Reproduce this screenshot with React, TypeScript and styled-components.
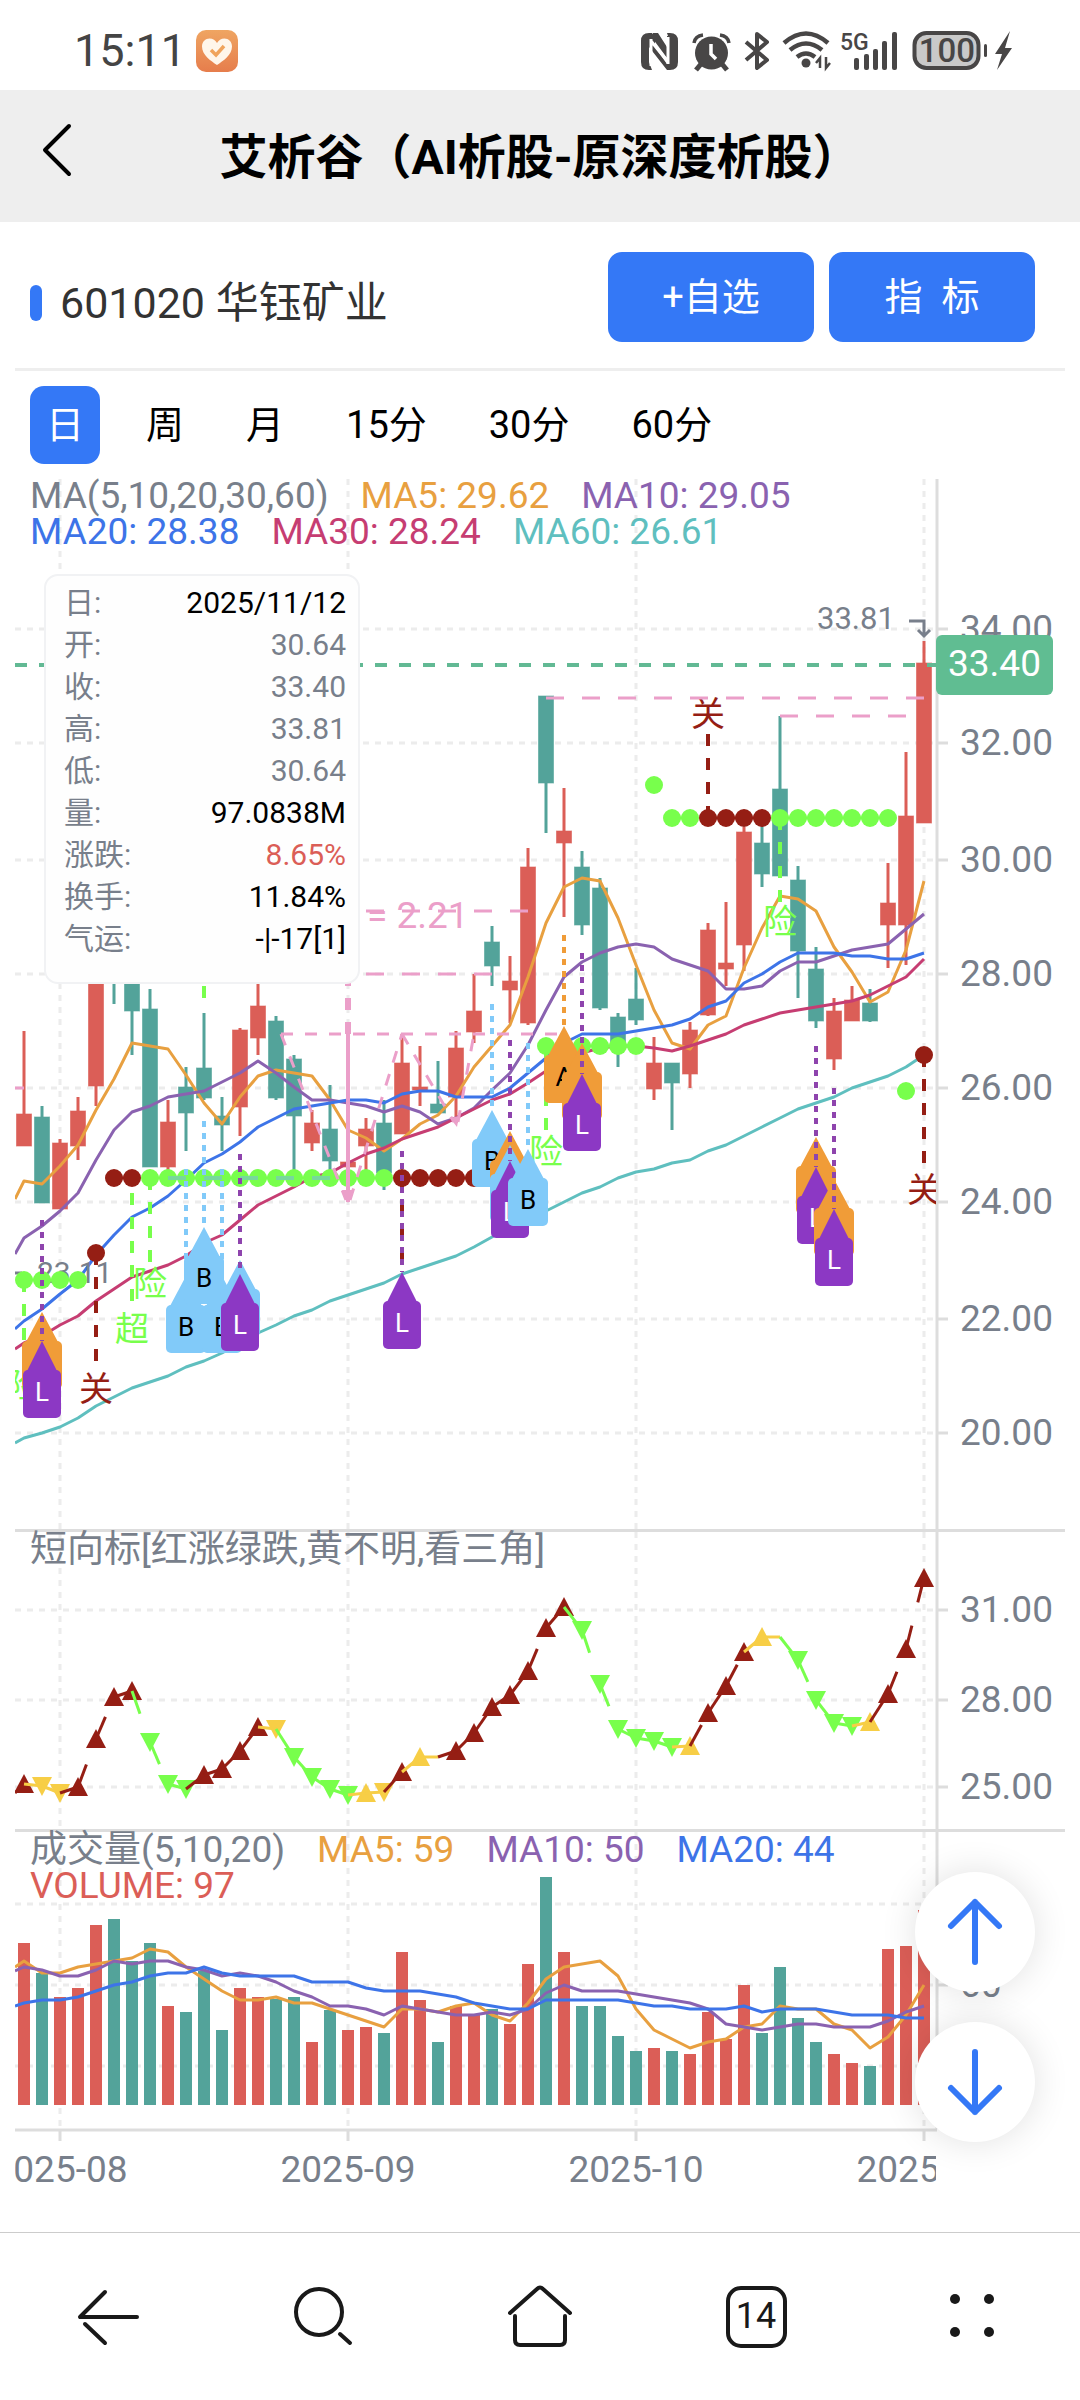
import React from 'react';
import styled, { createGlobalStyle } from 'styled-components';

const FONT = 'Roboto, "Noto Sans CJK SC", sans-serif';
const C = {
  brand: '#3478f6',
  up: '#db5e57',
  down: '#53a39a',
  ma5: '#e8a040',
  ma10: '#8a62b0',
  ma20: '#3d74e8',
  ma30: '#c63d72',
  ma60: '#5fbfbf',
  grey: '#787f8b',
  line: '#dddddd',
  grid: '#ececec',
  lime: '#78ff4c',
  dark: '#951e14',
  pink: '#eb9fc9',
  yellow: '#f7ce46',
  tag: '#60bd92',
  sky: '#81caf9',
  amber: '#f09c38',
  violet: '#8c38c4',
  plum: '#8e44ad',
};

const GlobalStyle = createGlobalStyle`
  * { box-sizing: border-box; }
  body { margin: 0; background: #fff; font-family: ${FONT}; }
  button { font-family: inherit; border: 0; padding: 0; background: none; cursor: pointer; }
`;

const Page = styled.div`
  display: flex;
  flex-direction: column;
  background: #fff;
`;

const StatusBar = styled.div`
  display: flex;
  align-items: center;
  height: 90px;
  padding: 12px 68px 0 74px;
  color: #444;
`;
const Clock = styled.span`
  font-size: 45px;
  line-height: 48px;
  margin-right: 10px;
`;
const StatusIcons = styled.svg`
  margin-left: auto;
`;

const TitleBar = styled.header`
  display: grid;
  grid-template-columns: 120px 1fr 120px;
  align-items: center;
  height: 132px;
  background: #eee;
`;
const BackButton = styled.button`
  display: flex;
  padding: 0 0 12px 40px;
`;
const Title = styled.h1`
  margin: 0;
  padding-top: 4px;
  font-size: 48px;
  line-height: 64px;
  font-weight: 700;
  text-align: center;
  white-space: nowrap;
`;

const StockRow = styled.section`
  display: flex;
  align-items: center;
  gap: 15px;
  margin: 0 15px;
  padding: 30px 30px 26px 15px;
  border-bottom: 3px solid #eee;
`;
const StockName = styled.h2`
  display: flex;
  align-items: center;
  gap: 18px;
  margin: 12px auto 0 0;
  font-size: 43px;
  line-height: 56px;
  font-weight: 400;
  color: #333;
  &::before {
    content: '';
    width: 12px;
    height: 36px;
    border-radius: 6px;
    background: ${C.brand};
  }
`;
const ActionButton = styled.button`
  width: 206px;
  height: 90px;
  padding-bottom: 8px;
  border-radius: 14px;
  background: ${C.brand};
  color: #fff;
  font-size: 38px;
`;

const Tabs = styled.nav`
  display: flex;
  gap: 30px;
  padding: 15px 30px 14px;
`;
const Tab = styled.button<{ $active?: boolean }>`
  height: 78px;
  padding: 0 16px 8px;
  border-radius: 14px;
  font-size: 38px;
  color: ${(p) => (p.$active ? '#fff' : '#000')};
  background: ${(p) => (p.$active ? C.brand : 'transparent')};
`;

const Chart = styled.main`
  margin: 0 15px;
`;
const Pane = styled.section<{ $ruled?: boolean }>`
  position: relative;
  border-top: ${(p) => (p.$ruled ? `3px solid ${C.line}` : '0')};
`;
const Plot = styled.svg`
  display: block;
  width: 100%;
  height: auto;
  font-family: ${FONT};
`;
const Legend = styled.div`
  position: absolute;
  left: 15px;
  top: 0;
  font-size: 37px;
  line-height: 36px;
`;
const LegendRow = styled.div`
  display: flex;
  gap: 32px;
  white-space: nowrap;
`;
const LegendItem = styled.span<{ $color: string }>`
  color: ${(p) => p.$color};
`;

const Tooltip = styled.dl`
  position: absolute;
  left: 29px;
  top: 96px;
  width: 316px;
  margin: 0;
  padding: 6px 12px 22px 18px;
  border: 2px solid #f1f2f4;
  border-radius: 14px;
  background: #fefefe;
  font-size: 30px;
  line-height: 42px;
`;
const TooltipRow = styled.div`
  display: flex;
  justify-content: space-between;
`;
const TooltipLabel = styled.dt`
  color: ${C.grey};
`;
const TooltipValue = styled.dd<{ $color: string }>`
  margin: 0;
  color: ${(p) => p.$color};
`;

const Floating = styled.div`
  position: absolute;
  right: 30px;
  top: 40px;
  display: flex;
  flex-direction: column;
  gap: 30px;
`;
const RoundButton = styled.button`
  display: flex;
  align-items: center;
  justify-content: center;
  width: 120px;
  height: 120px;
  border-radius: 50%;
  background: #fff;
  box-shadow: 0 0 36px rgba(0, 0, 0, 0.12);
`;

const BottomBar = styled.nav`
  display: grid;
  grid-template-columns: repeat(5, 1fr);
  height: 168px;
  border-top: 1px solid #ccc;
`;
const NavButton = styled.button`
  display: flex;
  align-items: center;
  justify-content: center;
`;

type Candle = [string, number, number, number, number];
// colour, wick top, body top, body bottom, wick bottom
const candles: Candle[] = [
  ['r', 1031, 1114, 1146, 1146], ['g', 1106, 1117, 1203, 1203], ['r', 1139, 1143, 1209, 1209],
  ['r', 1097, 1111, 1146, 1160], ['r', 960, 970, 1086, 1106], ['g', 940, 950, 975, 1004],
  ['g', 940, 960, 1011, 1055], ['g', 989, 1009, 1167, 1167], ['r', 1100, 1122, 1167, 1170],
  ['g', 1067, 1087, 1113, 1151], ['g', 1013, 1068, 1098, 1100], ['g', 1097, 1116, 1125, 1151],
  ['r', 1028, 1030, 1107, 1136], ['r', 984, 1006, 1038, 1055], ['g', 1016, 1021, 1098, 1100],
  ['g', 1055, 1059, 1116, 1170], ['r', 1110, 1123, 1143, 1151], ['g', 1085, 1129, 1161, 1170],
  ['r', 1139, 1162, 1167, 1167], ['r', 1118, 1129, 1146, 1170], ['g', 1100, 1123, 1173, 1190],
  ['r', 1034, 1063, 1134, 1134], ['r', 1046, 1087, 1090, 1106], ['g', 1061, 1104, 1113, 1113],
  ['r', 1031, 1048, 1097, 1123], ['r', 974, 1011, 1032, 1043], ['g', 926, 942, 966, 986],
  ['r', 956, 981, 990, 1023], ['r', 848, 867, 1023, 1025], ['g', 696, 696, 783, 833],
  ['r', 788, 831, 843, 917], ['g', 851, 867, 925, 935], ['g', 878, 888, 1008, 1010],
  ['g', 1013, 1017, 1043, 1067], ['g', 968, 999, 1020, 1025], ['r', 1037, 1063, 1089, 1100],
  ['g', 1063, 1063, 1083, 1130], ['r', 1022, 1030, 1074, 1088], ['r', 923, 930, 1015, 1016],
  ['r', 902, 963, 969, 986], ['r', 827, 832, 945, 971], ['g', 823, 843, 874, 887],
  ['g', 716, 789, 876, 876], ['g', 866, 880, 951, 998], ['g', 947, 969, 1021, 1028],
  ['r', 998, 1011, 1059, 1070], ['r', 986, 1000, 1021, 1021], ['g', 989, 1003, 1021, 1022],
  ['r', 863, 903, 925, 968], ['r', 752, 816, 925, 965], ['r', 641, 663, 823, 823],
];

// The first value of every average is where it meets the left edge of the plot.
const ma5 = [1199, 1181, 1184, 1166, 1145, 1110, 1079, 1043, 1046, 1049, 1075, 1103, 1124, 1097, 1076, 1070, 1073, 1076, 1100, 1130, 1138, 1151, 1139, 1124, 1115, 1096, 1067, 1046, 1025, 977, 923, 887, 878, 881, 918, 965, 1010, 1043, 1049, 1025, 1016, 968, 928, 896, 899, 911, 947, 972, 1002, 992, 950, 881];
const ma10 = [1254, 1238, 1226, 1211, 1193, 1160, 1130, 1112, 1106, 1097, 1094, 1091, 1082, 1073, 1061, 1073, 1087, 1100, 1100, 1103, 1106, 1112, 1106, 1112, 1124, 1118, 1108, 1090, 1073, 1045, 1010, 977, 962, 953, 947, 944, 947, 959, 965, 971, 989, 989, 986, 971, 962, 962, 956, 950, 947, 944, 929, 914];
const ma20 = [1329, 1321, 1309, 1294, 1280, 1255, 1235, 1217, 1208, 1196, 1180, 1163, 1154, 1142, 1127, 1118, 1109, 1106, 1103, 1100, 1100, 1103, 1094, 1091, 1091, 1097, 1097, 1097, 1088, 1073, 1058, 1043, 1034, 1034, 1034, 1031, 1028, 1025, 1019, 1007, 1001, 983, 974, 962, 953, 953, 953, 956, 956, 959, 959, 953];
const ma30 = [1349, 1343, 1336, 1325, 1316, 1301, 1289, 1277, 1271, 1265, 1256, 1243, 1235, 1220, 1205, 1196, 1187, 1177, 1173, 1163, 1154, 1148, 1139, 1133, 1127, 1118, 1109, 1100, 1094, 1083, 1071, 1060, 1053, 1048, 1046, 1046, 1048, 1051, 1046, 1040, 1034, 1025, 1019, 1013, 1010, 1007, 1004, 1001, 995, 986, 977, 959];
const ma60 = [1443, 1438, 1433, 1427, 1418, 1406, 1397, 1388, 1382, 1376, 1367, 1361, 1353, 1343, 1333, 1325, 1316, 1310, 1301, 1295, 1289, 1283, 1274, 1268, 1262, 1256, 1247, 1237, 1228, 1219, 1211, 1202, 1193, 1187, 1178, 1172, 1169, 1163, 1160, 1151, 1145, 1136, 1127, 1118, 1109, 1103, 1097, 1088, 1082, 1076, 1067, 1055];

const vol = [1943, 1973, 1997, 1988, 1925, 1919, 1961, 1943, 2006, 2012, 1971, 2030, 1988, 1997, 1999, 1997, 2042, 2010, 2030, 2027, 2033, 1952, 2000, 2042, 2006, 2015, 2009, 2024, 1964, 1877, 1952, 2006, 2006, 2036, 2051, 2048, 2051, 2054, 2012, 2039, 1985, 2033, 1967, 2018, 2042, 2054, 2063, 2066, 1949, 1946, 1910];
const vma5 = [1967, 1961, 1973, 1973, 1967, 1964, 1961, 1958, 1949, 1952, 1967, 1979, 1991, 2000, 2000, 1997, 2003, 2003, 2009, 2015, 2021, 2027, 2009, 2009, 2012, 2006, 2003, 2015, 2021, 2003, 1979, 1967, 1964, 1961, 1976, 2009, 2030, 2039, 2048, 2042, 2039, 2027, 2024, 2006, 2009, 2009, 2024, 2030, 2048, 2037, 2015, 1985];
const vma10 = [1971, 1967, 1970, 1976, 1976, 1970, 1961, 1964, 1961, 1961, 1967, 1970, 1976, 1973, 1976, 1982, 1991, 1997, 2006, 2006, 2009, 2015, 2006, 2009, 2012, 2015, 2015, 2012, 2015, 2009, 1993, 1985, 1991, 1991, 1991, 1994, 1997, 2000, 2003, 2009, 2024, 2027, 2030, 2027, 2024, 2024, 2027, 2027, 2027, 2021, 2012, 2006];
const vma20 = [2006, 2003, 2000, 2000, 1997, 1991, 1985, 1982, 1976, 1973, 1973, 1967, 1973, 1976, 1976, 1976, 1976, 1982, 1982, 1982, 1988, 1991, 1991, 1991, 1994, 1997, 2003, 2006, 2009, 2009, 2000, 2000, 2000, 2000, 2000, 2003, 2006, 2006, 2009, 2009, 2009, 2006, 2012, 2009, 2009, 2009, 2012, 2015, 2015, 2015, 2018, 2018];

// direction (u/d/none) + colour (r dark red, g green, y yellow), height
const trend: [string, number][] = [
  ['ur', 1784], ['dy', 1786], ['dy', 1793], ['ur', 1787], ['ur', 1739], ['ur', 1697], ['ur', 1691], ['dg', 1742], ['dg', 1784], ['dg', 1789],
  ['ur', 1775], ['ur', 1769], ['ur', 1751], ['ur', 1727], ['dy', 1729], ['dg', 1757], ['dg', 1777], ['dg', 1789], ['dg', 1795], ['uy', 1793],
  ['dy', 1792], ['ur', 1772], ['uy', 1757], ['ny', 1757], ['ur', 1751], ['ur', 1733], ['ur', 1707], ['ur', 1695], ['ur', 1671], ['ur', 1628],
  ['ur', 1607], ['dg', 1630], ['dg', 1684], ['dg', 1729], ['dg', 1738], ['dg', 1741], ['dg', 1747], ['uy', 1746], ['ur', 1713], ['ur', 1686],
  ['ur', 1652], ['uy', 1637], ['ny', 1637], ['dg', 1660], ['dg', 1700], ['dg', 1723], ['dg', 1726], ['uy', 1722], ['ur', 1694], ['ur', 1649], ['ur', 1578],
];
const trendColor: Record<string, string> = { r: C.dark, g: C.lime, y: C.yellow };

// first index, last index, height, colour
const dotRuns: [number, number, number, string][] = [
  [0, 3, 1280, C.lime], [4, 4, 1253, C.dark], [5, 6, 1178, C.dark], [7, 20, 1178, C.lime], [21, 26, 1178, C.dark],
  [29, 34, 1046, C.lime], [35, 35, 785, C.lime], [36, 37, 818, C.lime], [38, 41, 818, C.dark], [42, 48, 818, C.lime],
  [49, 49, 1091, C.lime], [50, 50, 1055, C.dark],
];

// x, label end of the line, dot end, colour, word, word baseline
const notes: [number, number, number, string, string, number][] = [
  [24, 1340, 1280, C.lime, '险', 1398],
  [96, 1361, 1253, C.dark, '关', 1401],
  [132, 1301, 1178, C.lime, '超', 1341],
  [150, 1262, 1178, C.lime, '险', 1296],
  [204, 998, 984, C.lime, '', 0],
  [402, 1265, 1178, C.dark, '', 0],
  [546, 1130, 1046, C.lime, '险', 1164],
  [708, 734, 818, C.dark, '关', 726],
  [780, 902, 818, C.lime, '险', 934],
  [924, 1163, 1055, C.dark, '关', 1202],
];

// kind, x, tip, start of the dotted line (0: no line)
const markers: [string, number, number, number][] = [
  ['A', 42, 1312, 0], ['L', 42, 1341, 1220],
  ['B', 186, 1276, 1169], ['B', 222, 1276, 1169], ['B', 204, 1227, 1121],
  ['B', 240, 1260, 0], ['L', 240, 1274, 1154],
  ['L', 402, 1272, 1151],
  ['B', 492, 1110, 1004],
  ['A', 510, 1131, 0], ['B', 510, 1145, 0], ['L', 510, 1161, 1040],
  ['B', 528, 1149, 1043],
  ['A', 564, 1026, 935],
  ['A', 582, 1043, 0], ['L', 582, 1074, 953],
  ['A', 816, 1137, 0], ['L', 816, 1167, 1046],
  ['A', 834, 1179, 0], ['L', 834, 1209, 1088],
];
const markerFill: Record<string, string> = { A: C.amber, B: C.sky, L: C.violet };
const markerLine: Record<string, string> = { A: C.amber, B: C.sky, L: C.plum };

const cx = (i: number) => 24 + i * 18;
const path = (v: number[]) => v.map((y, i) => `${i ? cx(i - 1) : 15},${y}`).join(' ');
const colorOf = (k: string) => (k === 'r' ? C.up : C.down);

const Grid = ({ top, bottom, rows }: { top: number; bottom: number; rows: [number, string][] }) => (
  <g>
    <g stroke={C.grid} strokeWidth="3" strokeDasharray="6 6">
      {[60, 348, 636, 924].map((x) => <line key={x} x1={x} x2={x} y1={top} y2={bottom} />)}
      {rows.map(([y]) => <line key={y} x1="15" x2="936" y1={y} y2={y} />)}
    </g>
    <line x1="937" x2="937" y1={top} y2={bottom} stroke={C.line} strokeWidth="3" />
    {rows.map(([y, t]) => (
      <g key={y}>
        <line x1="937" x2="948" y1={y} y2={y} stroke={C.line} strokeWidth="3" />
        <text x="960" y={y + 12} fontSize="37" fill={C.grey}>{t}</text>
      </g>
    ))}
  </g>
);

const Average = ({ values, color }: { values: number[]; color: string }) => (
  <polyline points={path(values)} fill="none" stroke={color} strokeWidth="3" strokeLinejoin="round" />
);

const Marker = ({ kind, x, y, from }: { kind: string; x: number; y: number; from: number }) => {
  const half = kind === 'L' ? 19 : 20;
  return (
    <g>
      {from > 0 && <line x1={x} x2={x} y1={from} y2={y} stroke={markerLine[kind]} strokeWidth="4" strokeDasharray="6 6" />}
      <path d={`M${x} ${y}l${half - 4} 30h-${2 * half - 8}z`} fill={markerFill[kind]} />
      <rect x={x - half} y={y + 29} width={half * 2} height="48" rx="5" fill={markerFill[kind]} />
      <text x={x} y={y + 60} fontSize="26" textAnchor="middle" fill={kind === 'L' ? '#fff' : '#000'}>{kind}</text>
    </g>
  );
};

const PricePane = () => (
  <Pane>
    <Plot viewBox="15 478 1050 1051" role="img" aria-label="K线图">
      <defs>
        <clipPath id="plot"><rect x="15" y="478" width="921" height="1051" /></clipPath>
      </defs>
      <Grid top={479} bottom={1529} rows={[[629, '34.00'], [743, '32.00'], [860, '30.00'], [974, '28.00'], [1088, '26.00'], [1202, '24.00'], [1319, '22.00'], [1433, '20.00']]} />
      <g clipPath="url(#plot)">
        {candles.map(([k, hi, a, b, lo], i) => (
          <g key={i} fill={colorOf(k)}>
            <rect x={cx(i) - 1.5} y={hi} width="3" height={lo - hi} />
            <rect x={cx(i) - 7.5} y={a} width="15" height={b - a} stroke={colorOf(k)} strokeOpacity="0.6" strokeWidth="1" />
          </g>
        ))}
        <Average values={ma5} color={C.ma5} />
        <Average values={ma10} color={C.ma10} />
        <Average values={ma20} color={C.ma20} />
        <Average values={ma30} color={C.ma30} />
        <Average values={ma60} color={C.ma60} />

        <text x="37" y="1283" fontSize="30" fill={C.grey}>23.11</text>
        <line x1="15" x2="22" y1="1273" y2="1273" stroke={C.grey} strokeWidth="3" />

        {notes.map(([x, from, to, color, word, base]) => (
          <g key={x}>
            <line x1={x} x2={x} y1={from} y2={to} stroke={color} strokeWidth="4" strokeDasharray="12 12" />
            <text x={x} y={base} fontSize="34" textAnchor="middle" fill={color}>{word}</text>
          </g>
        ))}
        {dotRuns.map(([a, b, y, color]) => (
          <g key={`${a}-${y}`} fill={color}>
            <line x1={cx(a)} x2={cx(b)} y1={y} y2={y} stroke={color} strokeWidth="3" />
            {Array.from({ length: b - a + 1 }, (_, n) => <circle key={n} cx={cx(a + n)} cy={y} r="9" />)}
          </g>
        ))}
        <line x1="168" x2="330" y1="1178" y2="1178" stroke="#77d89c" strokeWidth="4" strokeDasharray="18 18" />

        <g stroke={C.pink} strokeWidth="3" fill="none">
          <path d="M546 698H924M780 716H906M366 911H528M366 974H492" strokeDasharray="18 18" />
          <path d="M281 1034H558M281 1034L346 1200M350 1200L402 1034M402 1034L454 1122M458 1122L474 1034" strokeDasharray="12 12" />
          <path d="M15 1088H24" />
          <path d="M348 974V1034" strokeWidth="6" strokeDasharray="12 12" />
          <path d="M348 1034V1202" strokeWidth="4" />
        </g>
        <path d="M342 1190l6 13 6-13zM450 1118l7 9 2-11z" fill={C.pink} />
        <text x="367" y="928" fontSize="37" fill={C.pink}>= 2.21</text>

        {markers.map(([k, x, y, from], i) => <Marker key={i} kind={k} x={x} y={y} from={from} />)}
        <line x1="15" x2="936" y1="665" y2="665" stroke="#62b994" strokeWidth="4" strokeDasharray="12 12" />
      </g>
      <text x="817" y="629" fontSize="31" fill={C.grey}>33.81</text>
      <path d="M909 621H924V635M918 630l6 6 6-6" fill="none" stroke={C.grey} strokeWidth="3" />
      <rect x="936" y="635" width="117" height="60" rx="6" fill={C.tag} />
      <text x="948" y="676" fontSize="37" fill="#fff">33.40</text>
    </Plot>
    <Legend>
      <LegendRow>
        <LegendItem $color={C.grey}>MA(5,10,20,30,60)</LegendItem>
        <LegendItem $color={C.ma5}>MA5: 29.62</LegendItem>
        <LegendItem $color={C.ma10}>MA10: 29.05</LegendItem>
      </LegendRow>
      <LegendRow>
        <LegendItem $color={C.ma20}>MA20: 28.38</LegendItem>
        <LegendItem $color={C.ma30}>MA30: 28.24</LegendItem>
        <LegendItem $color={C.ma60}>MA60: 26.61</LegendItem>
      </LegendRow>
    </Legend>
    <Tooltip>
      {[
        ['日', '2025/11/12', '#000'], ['开', '30.64', C.grey], ['收', '33.40', C.grey], ['高', '33.81', C.grey], ['低', '30.64', C.grey],
        ['量', '97.0838M', '#000'], ['涨跌', '8.65%', C.up], ['换手', '11.84%', '#000'], ['气运', '-|-17[1]', '#000'],
      ].map(([label, value, color]) => (
        <TooltipRow key={label}>
          <TooltipLabel>{label}:</TooltipLabel>
          <TooltipValue $color={color}>{value}</TooltipValue>
        </TooltipRow>
      ))}
    </Tooltip>
  </Pane>
);

const TrendPane = () => (
  <Pane $ruled>
    <Plot viewBox="15 1532 1050 297" role="img" aria-label="短向标">
      <Grid top={1532} bottom={1829} rows={[[1610, '31.00'], [1700, '28.00'], [1787, '25.00']]} />
      <line x1="15" y1="1793" x2="24" y2="1784" stroke={C.dark} strokeWidth="3" />
      {trend.map(([k, y], i) => {
        const x = cx(i);
        const color = trendColor[k[1]];
        return (
          <g key={i}>
            {k[0] === 'u' && <path d={`M${x} ${y - 10}l10 19h-20z`} fill={color} />}
            {k[0] === 'd' && <path d={`M${x} ${y + 10}l10-19h-20z`} fill={color} />}
            {i > 0 && <line x1={cx(i - 1)} y1={trend[i - 1][1]} x2={x} y2={y} stroke={color} strokeWidth="3" strokeDasharray="24 24" />}
          </g>
        );
      })}
    </Plot>
    <Legend>
      <LegendItem $color={C.grey}>短向标[红涨绿跌,黄不明,看三角]</LegendItem>
    </Legend>
  </Pane>
);

const VolumePane = () => (
  <Pane $ruled>
    <Plot viewBox="15 1832 1050 400" role="img" aria-label="成交量">
      <defs>
        <clipPath id="months"><rect x="15" y="1832" width="921" height="400" /></clipPath>
      </defs>
      <Grid top={1832} bottom={2129} rows={[[1904, '90'], [1985, '60'], [2066, '30']]} />
      {vol.map((y, i) => <rect key={i} x={cx(i) - 6} y={y} width="12" height={2105 - y} fill={colorOf(candles[i][0])} />)}
      <Average values={vma5} color={C.ma5} />
      <Average values={vma10} color={C.ma10} />
      <Average values={vma20} color={C.ma20} />
      <path d="M15 2130H937M60 2131V2141M348 2131V2141M636 2131V2141M924 2131V2141" stroke={C.line} strokeWidth="3" />
      <g clipPath="url(#months)" fontSize="37" fill={C.grey} textAnchor="middle">
        <text x="60" y="2182">2025-08</text>
        <text x="348" y="2182">2025-09</text>
        <text x="636" y="2182">2025-10</text>
        <text x="924" y="2182">2025-11</text>
      </g>
    </Plot>
    <Legend>
      <LegendRow>
        <LegendItem $color={C.grey}>成交量(5,10,20)</LegendItem>
        <LegendItem $color={C.ma5}>MA5: 59</LegendItem>
        <LegendItem $color={C.ma10}>MA10: 50</LegendItem>
        <LegendItem $color={C.ma20}>MA20: 44</LegendItem>
      </LegendRow>
      <LegendItem $color={C.up}>VOLUME: 97</LegendItem>
    </Legend>
    <Floating>
      <RoundButton aria-label="上一只">
        <svg width="60" height="72" viewBox="0 0 60 72" fill="none" stroke={C.brand} strokeWidth="6" strokeLinecap="round" strokeLinejoin="round">
          <path d="M30 66V6M6 30L30 6L54 30" />
        </svg>
      </RoundButton>
      <RoundButton aria-label="下一只">
        <svg width="60" height="72" viewBox="0 0 60 72" fill="none" stroke={C.brand} strokeWidth="6" strokeLinecap="round" strokeLinejoin="round">
          <path d="M30 6V66M6 42L30 66L54 42" />
        </svg>
      </RoundButton>
    </Floating>
  </Pane>
);

const AppBadge = () => (
  <svg width="42" height="42" viewBox="0 0 42 42">
    <defs>
      <linearGradient id="badge" x1="0" y1="0" x2="0" y2="1">
        <stop offset="0" stopColor="#efa562" />
        <stop offset="1" stopColor="#e67d4c" />
      </linearGradient>
    </defs>
    <rect width="42" height="42" rx="10" fill="url(#badge)" />
    <path d="M21 35C15 31 6 25 6 16.500C6 11.500 9.500 8.500 13.500 8.500C17 8.500 19.500 10.500 21 13C22.500 10.500 25 8.500 28.500 8.500C32.500 8.500 36 11.500 36 16.500C36 25 27 31 21 35Z" fill="#fff6ea" />
    <path d="M15 20l5 5 8-9" fill="none" stroke="#f0a45c" strokeWidth="3.500" />
  </svg>
);

const Indicators = () => (
  <StatusIcons width="372" height="42" viewBox="641 30 372 42" fontFamily={FONT} fill="#484646" role="img" aria-label="NFC 闹钟 蓝牙 WLAN 5G 电量100">
    <path d="M650 33H653L671 56V42L668 33H671Q679 33 679 41V62Q679 70 671 70H668L650 47V62L653 70H650Q642 70 642 62V41Q642 33 650 33Z" />
    <path d="M656 33H661L668 45V64L656 47Z" fill="#fff" />
    <path d="M654 33H659L668 47V36H671V62L654 39Z" />
    <path d="M652 39V66M669 37V64M652 41L669 62" fill="none" stroke="#fff" strokeWidth="3" />
    <circle cx="712.500" cy="53" r="16.500" />
    <path d="M695 43Q696 36 704 35M730 43Q729 36 721 35" fill="none" stroke="#484646" strokeWidth="3.500" />
    <path d="M702 64l-5 6M723 64l5 6" stroke="#484646" strokeWidth="5" />
    <path d="M712 44V54L717 59" fill="none" stroke="#fff" strokeWidth="3.500" />
    <path d="M747 42L768 60L758 68V34L768 42L747 60" fill="none" stroke="#484646" strokeWidth="4" strokeLinejoin="round" />
    <g fill="none" stroke="#484646" strokeWidth="4.500">
      <path d="M785 43Q807 24 829 43" />
      <path d="M791 50Q807 37 823 50" />
      <path d="M798 57Q807 50 816 57" />
    </g>
    <circle cx="807" cy="63" r="4.500" />
    <path d="M821 68V58L817 63M827 57V68L831 63" fill="none" stroke="#484646" strokeWidth="2.500" />
    <text x="841" y="50" fontSize="23" fontWeight="500">5G</text>
    <g>
      <rect x="855" y="58" width="5" height="12" rx="2" />
      <rect x="865" y="54" width="5" height="16" rx="2" />
      <rect x="874" y="49" width="5" height="21" rx="2" />
      <rect x="883" y="41" width="5" height="29" rx="2" />
      <rect x="893" y="32" width="5" height="38" rx="2" />
    </g>
    <rect x="915.500" y="33" width="64" height="35" rx="12" fill="#c9c9c9" stroke="#484646" strokeWidth="4" />
    <text x="948" y="62" fontSize="33" textAnchor="middle" fontWeight="500">100</text>
    <rect x="985" y="44" width="3" height="13" rx="1.500" />
    <path d="M1011 31L996 54H1003L998 70L1013 48H1006Z" />
  </StatusIcons>
);

const ink = { fill: 'none', stroke: '#191919', strokeWidth: 4, strokeLinecap: 'round' as const, strokeLinejoin: 'round' as const };

export default function App() {
  return (
    <Page>
      <GlobalStyle />
      <StatusBar>
        <Clock>15:11</Clock>
        <AppBadge />
        <Indicators />
      </StatusBar>
      <TitleBar>
        <BackButton aria-label="返回">
          <svg width="34" height="56" viewBox="0 0 34 56" fill="none" stroke="#000" strokeWidth="4" strokeLinecap="round" strokeLinejoin="round">
            <path d="M29 4L5 28L29 52" />
          </svg>
        </BackButton>
        <Title>艾析谷（AI析股-原深度析股）</Title>
      </TitleBar>
      <StockRow>
        <StockName>601020 华钰矿业</StockName>
        <ActionButton>+自选</ActionButton>
        <ActionButton>指{'\u00a0\u00a0'}标</ActionButton>
      </StockRow>
      <Tabs>
        <Tab $active>日</Tab>
        <Tab>周</Tab>
        <Tab>月</Tab>
        <Tab>15分</Tab>
        <Tab>30分</Tab>
        <Tab>60分</Tab>
      </Tabs>
      <Chart>
        <PricePane />
        <TrendPane />
        <VolumePane />
      </Chart>
      <BottomBar>
        <NavButton aria-label="后退">
          <svg width="64" height="64" viewBox="76 2285 64 64" {...ink}><path d="M105 2292L80 2317H137M85 2324L105 2343" /></svg>
        </NavButton>
        <NavButton aria-label="搜索">
          <svg width="64" height="64" viewBox="292 2285 64 64" {...ink}><circle cx="319" cy="2312" r="23" /><path d="M340 2334L350 2343" /></svg>
        </NavButton>
        <NavButton aria-label="主页">
          <svg width="64" height="64" viewBox="508 2285 64 64" {...ink}>
            <path d="M510 2313L537 2289Q540 2286 543 2289L570 2313M515 2316V2340Q515 2345 520 2345H560Q565 2345 565 2340V2316" />
          </svg>
        </NavButton>
        <NavButton aria-label="标签页">
          <svg width="64" height="64" viewBox="724 2285 64 64" {...ink}>
            <rect x="728" y="2288" width="57" height="58" rx="13" />
            <text x="756" y="2328" fontFamily={FONT} fontSize="36" textAnchor="middle" fill="#191919" stroke="none">14</text>
          </svg>
        </NavButton>
        <NavButton aria-label="更多">
          <svg width="64" height="64" viewBox="940 2285 64 64" fill="#191919">
            <circle cx="955" cy="2299" r="5" /><circle cx="989" cy="2299" r="5" /><circle cx="955" cy="2332" r="5" /><circle cx="989" cy="2332" r="5" />
          </svg>
        </NavButton>
      </BottomBar>
    </Page>
  );
}
